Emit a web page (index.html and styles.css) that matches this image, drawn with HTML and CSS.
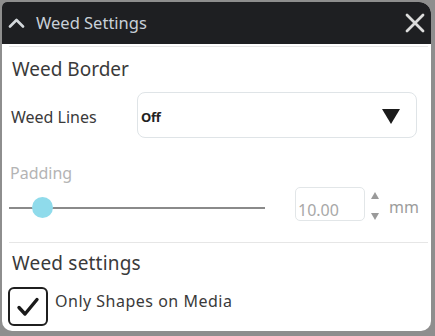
FILE: index.html
```html
<!DOCTYPE html>
<html lang="en">
<head>
  <meta charset="UTF-8">
  <meta name="viewport" content="width=device-width, initial-scale=1.0">
  <title>Weed Settings</title>
  <link rel="stylesheet" href="styles.css">
</head>
<body>
  <div class="window">
    <div class="titlebar">
      <svg class="chevron" width="17" height="10" viewBox="0 0 17 10">
        <polyline points="2,8.5 8.5,2 15,8.5" fill="none" stroke="#d4d8dc" stroke-width="2.6" stroke-linecap="round" stroke-linejoin="round"/>
      </svg>
      <span class="title">Weed Settings</span>
      <svg class="close" width="20" height="20" viewBox="0 0 20 20">
        <path d="M2 2 L18 18 M18 2 L2 18" stroke="#dcdcdc" stroke-width="2.8" stroke-linecap="round"/>
      </svg>
    </div>

    <div class="panel">
      <div class="rule top-rule"></div>

      <div class="section-title first">Weed Border</div>

      <div class="field-row">
        <span class="field-label">Weed Lines</span>
        <div class="dropdown">
          <span class="dropdown-value">Off</span>
          <svg class="dropdown-arrow" width="18" height="15" viewBox="0 0 18 15">
            <polygon points="0,0 18,0 9,15" fill="#1b1b1b"/>
          </svg>
        </div>
      </div>

      <div class="muted-label">Padding</div>

      <div class="slider-row">
        <div class="slider">
          <div class="track"></div>
          <div class="thumb"></div>
        </div>
        <div class="number-box">10.00</div>
        <div class="spinner">
          <svg width="8" height="7" viewBox="0 0 8 7"><polygon points="4,0 8,7 0,7" fill="#9a9a9a"/></svg>
          <svg width="8" height="7" viewBox="0 0 8 7"><polygon points="0,0 8,0 4,7" fill="#9a9a9a"/></svg>
        </div>
        <span class="unit">mm</span>
      </div>

      <div class="rule divider"></div>

      <div class="section-title second">Weed settings</div>

      <div class="check-row">
        <div class="checkbox">
          <svg width="24" height="22" viewBox="0 0 24 22">
            <polyline points="3,11.5 9,18 21,3.5" fill="none" stroke="#1a1a1a" stroke-width="3.4" stroke-linecap="round" stroke-linejoin="round"/>
          </svg>
        </div>
        <span class="check-label">Only Shapes on Media</span>
      </div>
    </div>
  </div>
</body>
</html>
```

FILE: styles.css
```css
body {
  margin: 0;
  padding: 2px 4px 0 2px;
  background-color: #8e8e8e;
  font-family: "Noto Sans", "Open Sans", sans-serif;
  color: #3a3a3a;
}
.window {
  height: 329px;
  background: #fff;
  border-radius: 5px 12px 10px 10px;
  overflow: hidden;
}
.titlebar {
  height: 42px;
  background: #1e1f22;
  display: flex;
  align-items: center;
  padding: 0 6px;
}
.chevron {
  display: block;
}
.title {
  margin-left: 11px;
  font-size: 16.5px;
  color: #c8d0d8;
  line-height: 22px;
}
.close {
  display: block;
  margin-left: auto;
}
.panel {
  padding: 0 3px 0 7px;
}
.rule {
  height: 1px;
  background: #e6e6e6;
}
.top-rule {
  margin-top: 2px;
}
.section-title {
  font-size: 19px;
  line-height: 26px;
  height: 26px;
  margin-left: 3px;
}
.section-title.first {
  margin-top: 9px;
}
.section-title.second {
  margin-top: 7px;
  letter-spacing: 0.2px;
}
.field-row {
  display: flex;
  align-items: center;
  height: 46px;
  margin-top: 10px;
}
.field-label {
  width: 126px;
  margin-left: 2px;
  font-size: 16px;
  line-height: 22px;
  padding-top: 4px;
}
.dropdown {
  flex: 1;
  height: 44px;
  margin-right: 11px;
  border: 1px solid #dfe4e7;
  border-radius: 8px;
  display: flex;
  align-items: center;
  padding: 0 16px 0 3px;
}
.dropdown-value {
  font-weight: bold;
  font-size: 13px;
  letter-spacing: -0.3px;
  color: #222;
  padding-top: 4px;
}
.dropdown-arrow {
  display: block;
  margin-left: auto;
  margin-top: 2px;
}
.muted-label {
  margin-top: 24px;
  margin-left: 1px;
  font-size: 16px;
  line-height: 22px;
  color: #b4b4b4;
}
.slider-row {
  display: flex;
  align-items: flex-start;
  height: 34px;
  margin-top: 3px;
}
.slider {
  position: relative;
  width: 256px;
  height: 34px;
}
.track {
  position: absolute;
  left: 0;
  right: 0;
  top: 20px;
  height: 2px;
  background: #8a8a8a;
}
.thumb {
  position: absolute;
  left: 23px;
  top: 10px;
  width: 21px;
  height: 21px;
  border-radius: 50%;
  background: #8fdbeb;
}
.number-box {
  margin-left: 30px;
  width: 66px;
  height: 21px;
  padding: 11px 0 0 2px;
  border: 1px solid #e2e6e8;
  border-radius: 5px;
  font-size: 16px;
  line-height: 22px;
  color: #a8a8a8;
  overflow: hidden;
}
.spinner {
  margin-left: 6px;
  margin-top: 5px;
  height: 28px;
  display: flex;
  flex-direction: column;
  justify-content: space-between;
}
.spinner svg {
  display: block;
}
.unit {
  margin-left: 10px;
  margin-top: 9px;
  font-size: 16px;
  line-height: 22px;
  color: #9c9c9c;
}
.divider {
  margin-top: 21px;
}
.check-row {
  display: flex;
  align-items: flex-start;
  margin-top: 11px;
  margin-left: -1px;
}
.checkbox {
  width: 36px;
  height: 35px;
  border: 2.5px solid #1f1f1f;
  border-radius: 6px;
  display: flex;
  align-items: center;
  justify-content: center;
}
.checkbox svg {
  display: block;
}
.check-label {
  margin-left: 7px;
  margin-top: 3px;
  font-size: 16px;
  letter-spacing: 0.5px;
  line-height: 22px;
}
```
